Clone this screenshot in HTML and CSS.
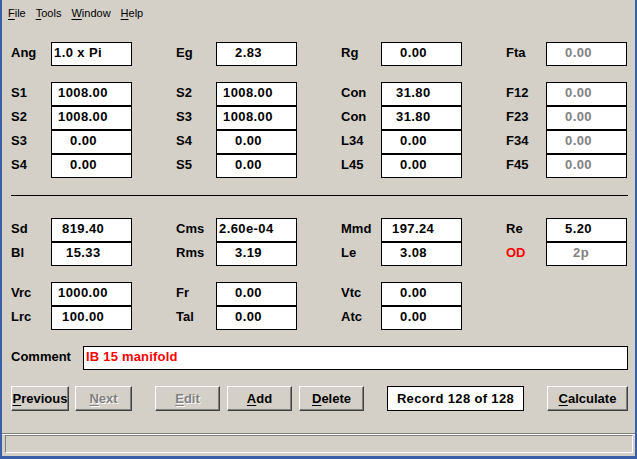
FILE: index.html
```html
<!DOCTYPE html>
<html>
<head>
<meta charset="utf-8">
<title>Driver Record</title>
<link rel="stylesheet" href="styles.css">
</head>
<body>
<div class="window">
  <div class="menubar">
    <span class="menu"><u>F</u>ile</span>
    <span class="menu"><u>T</u>ools</span>
    <span class="menu"><u>W</u>indow</span>
    <span class="menu"><u>H</u>elp</span>
  </div>

  <div class="form">
    <div class="group">
      <div class="field"><span class="label">Ang</span><span class="box">1.0 x Pi</span></div>
      <div class="field"><span class="label">Eg</span><span class="box">    2.83</span></div>
      <div class="field"><span class="label">Rg</span><span class="box">    0.00</span></div>
      <div class="field"><span class="label">Fta</span><span class="box off">    0.00</span></div>
    </div>

    <div class="group gap">
      <div class="field"><span class="label">S1</span><span class="box"> 1008.00</span></div>
      <div class="field"><span class="label">S2</span><span class="box"> 1008.00</span></div>
      <div class="field"><span class="label">Con</span><span class="box">   31.80</span></div>
      <div class="field"><span class="label">F12</span><span class="box off">    0.00</span></div>

      <div class="field"><span class="label">S2</span><span class="box"> 1008.00</span></div>
      <div class="field"><span class="label">S3</span><span class="box"> 1008.00</span></div>
      <div class="field"><span class="label">Con</span><span class="box">   31.80</span></div>
      <div class="field"><span class="label">F23</span><span class="box off">    0.00</span></div>

      <div class="field"><span class="label">S3</span><span class="box">    0.00</span></div>
      <div class="field"><span class="label">S4</span><span class="box">    0.00</span></div>
      <div class="field"><span class="label">L34</span><span class="box">    0.00</span></div>
      <div class="field"><span class="label">F34</span><span class="box off">    0.00</span></div>

      <div class="field"><span class="label">S4</span><span class="box">    0.00</span></div>
      <div class="field"><span class="label">S5</span><span class="box">    0.00</span></div>
      <div class="field"><span class="label">L45</span><span class="box">    0.00</span></div>
      <div class="field"><span class="label">F45</span><span class="box off">    0.00</span></div>
    </div>

    <div class="sep"></div>

    <div class="group after-sep">
      <div class="field"><span class="label">Sd</span><span class="box">  819.40</span></div>
      <div class="field"><span class="label">Cms</span><span class="box">2.60e-04</span></div>
      <div class="field"><span class="label">Mmd</span><span class="box">  197.24</span></div>
      <div class="field"><span class="label">Re</span><span class="box">    5.20</span></div>

      <div class="field"><span class="label">Bl</span><span class="box">   15.33</span></div>
      <div class="field"><span class="label">Rms</span><span class="box">    3.19</span></div>
      <div class="field"><span class="label">Le</span><span class="box">    3.08</span></div>
      <div class="field"><span class="label red">OD</span><span class="box off">      2p</span></div>
    </div>

    <div class="group gap">
      <div class="field"><span class="label">Vrc</span><span class="box"> 1000.00</span></div>
      <div class="field"><span class="label">Fr</span><span class="box">    0.00</span></div>
      <div class="field"><span class="label">Vtc</span><span class="box">    0.00</span></div>
      <div class="field empty"></div>

      <div class="field"><span class="label">Lrc</span><span class="box">  100.00</span></div>
      <div class="field"><span class="label">Tal</span><span class="box">    0.00</span></div>
      <div class="field"><span class="label">Atc</span><span class="box">    0.00</span></div>
      <div class="field empty"></div>
    </div>

    <div class="comment-row gap">
      <span class="label comment-label">Comment</span>
      <span class="box comment-box">IB 15 manifold</span>
    </div>

    <div class="buttons gap">
      <div class="btn-group nav">
        <div class="btn btn-prev"><span><u>P</u>revious</span></div>
        <div class="btn btn-next disabled"><span><u>N</u>ext</span></div>
      </div>
      <div class="btn-group edit">
        <div class="btn btn-mid disabled"><span><u>E</u>dit</span></div>
        <div class="btn btn-mid"><span><u>A</u>dd</span></div>
        <div class="btn btn-mid"><span><u>D</u>elete</span></div>
      </div>
      <div class="record">Record 128 of 128</div>
      <div class="btn btn-calc"><span><u>C</u>alculate</span></div>
    </div>
  </div>

  <div class="statusbar">
    <div class="status-panel"></div>
  </div>
</div>
</body>
</html>
```

FILE: styles.css
```css
* {
  box-sizing: border-box;
}

html, body {
  margin: 0;
  padding: 0;
  background: #d4d0c8;
}

body {
  font-family: "Liberation Sans", Arial, sans-serif;
  color: #000;
}

.window {
  width: 637px;
  height: 459px;
  background: #d4d0c8;
  border-left: 2px solid #3a5fa8;
  border-right: 2px solid #3a5fa8;
  border-bottom: 3px solid #3a5fa8;
  display: flex;
  flex-direction: column;
  overflow: hidden;
}

/* ---------- menu ---------- */
.menubar {
  height: 24px;
  padding: 2px 0 0 1px;
  display: flex;
  font-size: 11px;
  line-height: 22px;
}

.menu {
  padding: 0 5px;
}

.menu u,
.btn u {
  text-decoration: underline;
  text-underline-offset: 2px;
}

/* ---------- form ---------- */
.form {
  padding: 18px 0 0 9px;
  font-size: 13px;
  font-weight: bold;
}

.group {
  display: grid;
  grid-template-columns: repeat(3, 165px) 121px;
  grid-auto-rows: 24px;
}

.gap {
  margin-top: 16px;
}

.after-sep {
  margin-top: 22px;
}

.sep {
  margin-top: 17px;
  width: 617px;
  height: 1px;
  background: #000;
}

.field {
  display: flex;
}

.label {
  width: 40px;
  line-height: 22px;
  white-space: nowrap;
}

.red {
  color: #ff0000;
}

.box {
  width: 81px;
  height: 24px;
  border: 1px solid #000;
  background: #fff;
  padding-left: 2px;
  line-height: 20px;
  white-space: pre;
  letter-spacing: 0.4px;
  overflow: hidden;
}

.box.off {
  color: #808080;
}

/* ---------- comment ---------- */
.comment-row {
  display: flex;
  height: 24px;
}

.comment-label {
  width: 72px;
}

.comment-box {
  width: 545px;
  color: #ff0000;
  letter-spacing: 0.2px;
}

/* ---------- buttons ---------- */
.buttons {
  display: flex;
  gap: 23px;
  height: 25px;
}

.btn-group {
  display: flex;
}

.btn-group.nav {
  gap: 6px;
}

.btn-group.edit {
  gap: 7px;
}

.btn {
  height: 25px;
  background: #d4d0c8;
  border-top: 1px solid #ffffff;
  border-left: 1px solid #ffffff;
  border-right: 1px solid #404040;
  border-bottom: 1px solid #404040;
  box-shadow: inset -1px -1px 0 #808080;
  display: flex;
  align-items: center;
  justify-content: center;
  overflow: hidden;
  white-space: nowrap;
  line-height: 1;
}

.btn-prev {
  width: 58px;
}

.btn-next {
  width: 57px;
}

.btn-mid {
  width: 65px;
}

.btn-calc {
  width: 81px;
}

.btn.disabled {
  color: #808080;
  text-shadow: 1px 1px 0 #ffffff;
}

.record {
  width: 137px;
  height: 25px;
  border: 1px solid #000;
  background: #fff;
  display: flex;
  align-items: center;
  justify-content: center;
  letter-spacing: 0.35px;
  line-height: 1;
}

/* ---------- status bar ---------- */
.statusbar {
  margin-top: auto;
  border-top: 1px solid #808080;
  box-shadow: inset 0 1px 0 #ffffff;
  padding: 1px 2px 3px 3px;
}

.status-panel {
  height: 18px;
  border-top: 1px solid #808080;
  border-left: 1px solid #808080;
  border-right: 1px solid #ffffff;
  border-bottom: 1px solid #ffffff;
}
```
